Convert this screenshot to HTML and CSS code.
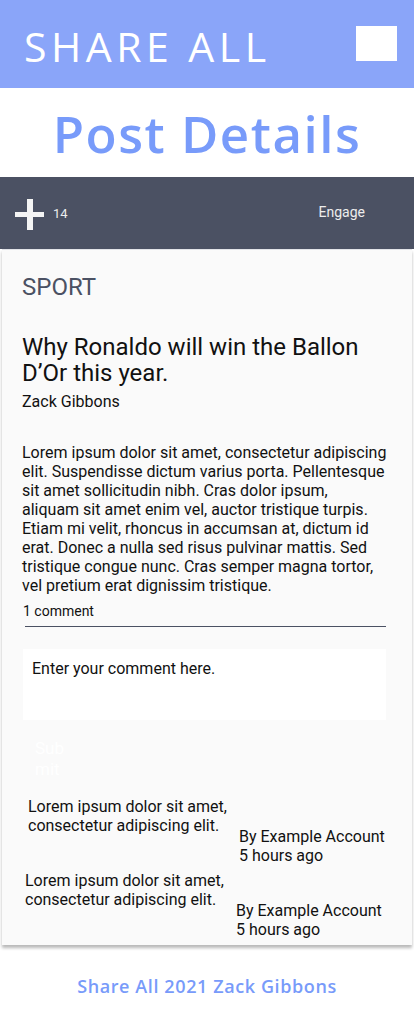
FILE: index.html
```html
<!DOCTYPE html>
<html lang="en">
<head>
<meta charset="utf-8">
<title>Share All - Post Details</title>
<link rel="stylesheet" href="styles.css">
</head>
<body>
<header class="topbar">
  <span class="brand">SHARE ALL</span>
  <span class="menu-box" aria-label="menu"></span>
</header>
<h1 class="page-title">Post Details</h1>
<div class="actionbar">
  <div class="likes">
    <svg class="plus" width="29" height="31" viewBox="0 0 29 31" aria-hidden="true">
      <rect x="12" y="0" width="6" height="31" fill="#F4F4F4"/>
      <rect x="0" y="13" width="29" height="5" fill="#F4F4F4"/>
    </svg>
    <span class="likes-count">14</span>
  </div>
  <span class="engage">Engage</span>
</div>
<article class="card">
  <div class="category">SPORT</div>
  <h2 class="post-title">Why Ronaldo will win the Ballon D’Or this year.</h2>
  <div class="author">Zack Gibbons</div>
  <p class="post-body">Lorem ipsum dolor sit amet, consectetur adipiscing elit. Suspendisse dictum varius porta. Pellentesque sit amet sollicitudin nibh. Cras dolor ipsum, aliquam sit amet enim vel, auctor tristique turpis. Etiam mi velit, rhoncus in accumsan at, dictum id erat. Donec a nulla sed risus pulvinar mattis. Sed tristique congue nunc. Cras semper magna tortor, vel pretium erat dignissim tristique.</p>
  <div class="comment-count">1 comment</div>
  <div class="comment-input">Enter your comment here.</div>
  <button class="submit">Submit</button>
  <div class="comment">
    <div class="comment-text">Lorem ipsum dolor sit amet, consectetur adipiscing elit.</div>
    <div class="comment-meta">By Example Account<br>5 hours ago</div>
  </div>
  <div class="comment comment--second">
    <div class="comment-text">Lorem ipsum dolor sit amet, consectetur adipiscing elit.</div>
    <div class="comment-meta">By Example Account<br>5 hours ago</div>
  </div>
</article>
<footer class="footer">Share All 2021 Zack Gibbons</footer>
</body>
</html>
```
FILE: styles.css
```css
* { box-sizing: border-box; }
html, body { margin: 0; padding: 0; background: #FFFFFF; }
body { font-family: Roboto, "Liberation Sans", sans-serif; color: #111111; width: 414px; }

.topbar {
  height: 88px;
  background: #8AA5F9;
  display: flex;
  align-items: center;
  justify-content: space-between;
  padding: 0 17px 0 24px;
}
.brand {
  font-family: "Open Sans", "DejaVu Sans", sans-serif;
  font-weight: 400;
  font-size: 41px;
  letter-spacing: 4.5px;
  color: #FFFFFF;
  line-height: 1;
  margin-top: 4px;
}
.menu-box {
  width: 41px;
  height: 35px;
  background: #FFFFFF;
  margin-top: -1px;
}

.page-title {
  margin: 0;
  height: 89px;
  display: flex;
  align-items: center;
  justify-content: center;
  font-family: "Open Sans", "DejaVu Sans", sans-serif;
  font-weight: 600;
  font-size: 51px;
  letter-spacing: 1.5px;
  color: #789BFA;
}

.actionbar {
  height: 72px;
  background: #4B5163;
  display: flex;
  align-items: center;
  justify-content: space-between;
  padding: 0 49px 0 15px;
}
.likes { display: flex; align-items: center; gap: 9px; }
.plus { display: block; margin-top: 2px; }
.likes-count { color: #EDEDED; font-size: 13px; }
.engage { color: #EDEDED; font-size: 14px; margin-bottom: 2px; }

.card {
  margin: 0 2px;
  background: #FAFAFA;
  border-top: 1px solid #E2E3E8;
  box-shadow: 0 3px 3px rgba(0,0,0,0.28);
  padding: 23px 24px 5px 20px;
}
.category {
  font-size: 24px;
  color: #4B5163;
  line-height: 28px;
}
.post-title {
  margin: 33px 2px 0 0;
  font-size: 24px;
  font-weight: 400;
  line-height: 26px;
  color: #111111;
}
.author {
  margin-top: 6px;
  font-size: 16px;
  line-height: 19px;
}
.post-body {
  margin: 32px 0 0;
  font-size: 16px;
  line-height: 19px;
}
.comment-count {
  margin: 8px 2px 0 3px;
  font-size: 14px;
  line-height: 17px;
  padding-bottom: 6px;
  border-bottom: 1px solid #4B5163;
  text-indent: -2px;
}
.comment-input {
  margin: 22px 2px 0 1px;
  height: 71px;
  background: #FFFFFF;
  padding: 10px 9px;
  font-size: 16px;
  line-height: 19px;
}
.submit {
  display: block;
  margin: 18px 0 0 13px;
  width: 40px;
  padding: 0;
  border: 0;
  background: transparent;
  color: #FFFFFF;
  font-family: Roboto, "Liberation Sans", sans-serif;
  font-size: 17px;
  line-height: 21px;
  text-align: left;
  word-break: break-all;
}
.comment {
  display: flex;
  align-items: flex-end;
  margin-top: 17px;
  padding-left: 6px;
}
.comment--second { margin-top: 5px; padding-left: 3px; }
.comment-text {
  width: 211px;
  font-size: 16px;
  line-height: 19px;
  align-self: flex-start;
}
.comment-meta {
  font-size: 16px;
  line-height: 19px;
  padding-bottom: 1px;
  margin-top: 30px;
}

.footer {
  text-align: center;
  font-family: "Open Sans", "DejaVu Sans", sans-serif;
  font-weight: 600;
  font-size: 18px;
  letter-spacing: 0.6px;
  color: #789BFA;
  padding: 29px 0 0;
}
```
